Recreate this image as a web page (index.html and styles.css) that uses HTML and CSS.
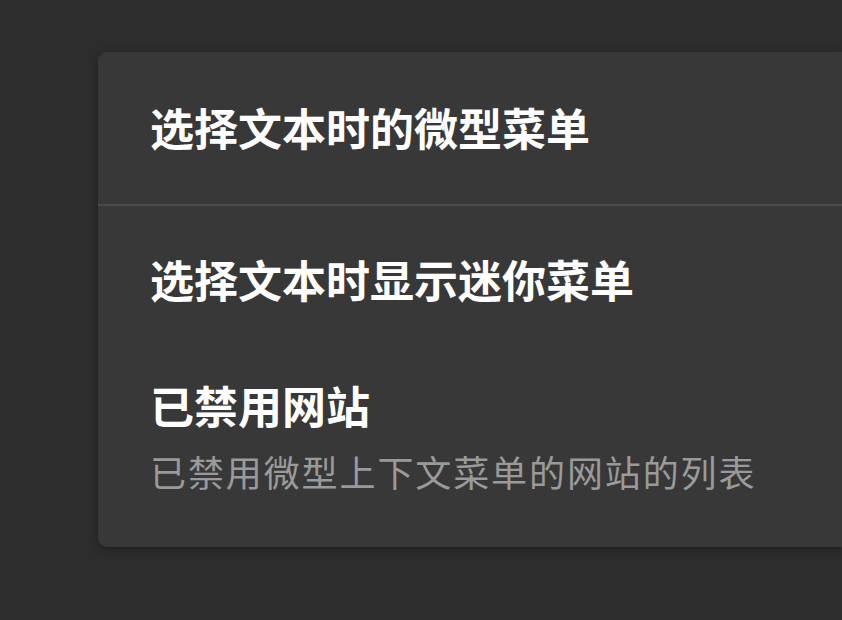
FILE: index.html
```html
<!DOCTYPE html>
<html lang="zh">
<head>
<meta charset="utf-8">
<link rel="stylesheet" href="styles.css">
</head>
<body>
<div class="page">
  <section class="card">
    <header class="card-header">
      <h1 class="card-title">选择文本时的微型菜单</h1>
    </header>
    <div class="card-body">
      <div class="row">
        <div class="row-title">选择文本时显示迷你菜单</div>
      </div>
      <div class="row">
        <div class="row-title">已禁用网站</div>
        <div class="row-sub">已禁用微型上下文菜单的网站的列表</div>
      </div>
    </div>
  </section>
</div>
</body>
</html>
```

FILE: styles.css
```css
html, body {
  margin: 0;
  padding: 0;
  background: #2d2d2d;
  height: 100%;
  overflow: hidden;
}
body {
  font-family: "Noto Sans CJK SC", "Noto Sans", sans-serif;
  color: #ffffff;
}
.page {
  padding: 52px 0 0 98px;
}
.card {
  height: 495px;
  background: #383838;
  border-radius: 9px 0 0 9px;
  box-shadow: 0 2px 8px rgba(0, 0, 0, 0.35);
  display: flex;
  flex-direction: column;
}
.card-header {
  height: 152px;
  display: flex;
  align-items: center;
  padding-left: 52px;
  border-bottom: 2px solid #4b4b4b;
}
.card-title {
  margin: 0;
  font-size: 44px;
  font-weight: 700;
  line-height: 56px;
  position: relative;
  top: -1px;
}
.card-body {
  padding: 10px 0 15px 52px;
}
.row {
  padding: 35px 0;
}
.row-title {
  font-size: 44px;
  font-weight: 700;
  line-height: 56px;
}
.row-sub {
  margin-top: 14px;
  font-size: 36px;
  letter-spacing: 1.9px;
  line-height: 48px;
  color: #9a9a9a;
}
```
